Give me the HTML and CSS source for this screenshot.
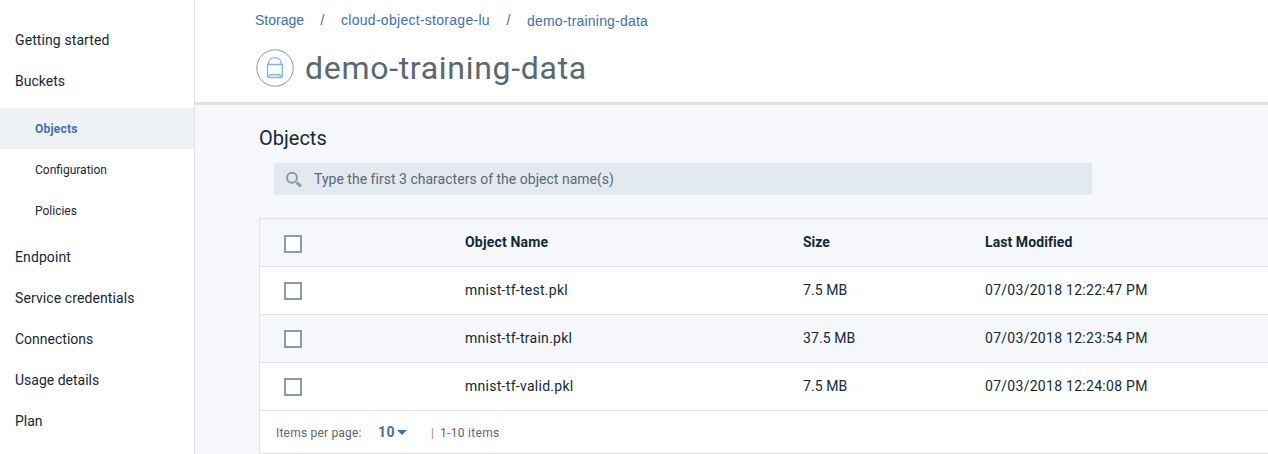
FILE: index.html
```html
<!DOCTYPE html>
<html lang="en">
<head>
<meta charset="utf-8">
<title>demo-training-data</title>
<link rel="stylesheet" href="styles.css">
</head>
<body>
<div class="app">
  <nav class="sidebar">
    <a class="nav-item t-getting">Getting started</a>
    <a class="nav-item t-buckets">Buckets</a>
    <div class="subnav">
      <a class="sub-item active">Objects</a>
      <a class="sub-item t-config">Configuration</a>
      <a class="sub-item t-policies">Policies</a>
    </div>
    <a class="nav-item t-endpoint">Endpoint</a>
    <a class="nav-item t-service">Service credentials</a>
    <a class="nav-item t-conn">Connections</a>
    <a class="nav-item t-usage">Usage details</a>
    <a class="nav-item t-plan">Plan</a>
  </nav>
  <main class="main">
    <header class="header">
      <div class="crumbs">
        <a>Storage</a><span class="slash">/</span><a class="crumb-mid">cloud-object-storage-lu</a><span class="slash">/</span><a class="crumb-last">demo-training-data</a>
      </div>
      <div class="title-row">
        <svg class="bucket" width="38" height="38" viewBox="0 0 38 38" fill="none">
          <circle cx="19" cy="19" r="18.2" stroke="#8897a2"/>
          <g stroke="#7cb5fa" stroke-width="1.3">
            <path d="M12.500 15.500V14.500C12.500 10.800 15.200 8.600 18.800 8.600S25.200 10.800 25.200 14.500V15.500"/>
            <path d="M11.500 15.500H26.300V26.800Q26.300 28.500 24.300 28.500H13.500Q11.500 28.500 11.500 26.800Z"/>
            <path d="M12 27.300Q13.500 25.500 18.900 25.500T25.800 27.300"/>
          </g>
        </svg>
        <h1 class="title">demo-training-data</h1>
      </div>
    </header>
    <section class="content">
      <h2 class="heading">Objects</h2>
      <div class="search">
        <svg class="search-icon" width="17" height="17" viewBox="0 0 17 17" fill="none" stroke="#8c9ba5">
          <circle cx="7" cy="6.700" r="5" stroke-width="2"/>
          <path d="M11.600 11.400L15.900 15.400" stroke-width="3"/>
        </svg>
        <span class="placeholder">Type the first 3 characters of the object name(s)</span>
      </div>
      <div class="table">
        <div class="row head"><span class="box"></span><span class="t-name">Object Name</span><span class="t-size">Size</span><span class="t-mod">Last Modified</span></div>
        <div class="row"><span class="box"></span><span class="name">mnist-tf-test.pkl</span><span class="size">7.5 MB</span><span class="date">07/03/2018 12:22:47 PM</span></div>
        <div class="row alt"><span class="box"></span><span class="name">mnist-tf-train.pkl</span><span class="size">37.5 MB</span><span class="date">07/03/2018 12:23:54 PM</span></div>
        <div class="row"><span class="box"></span><span class="name">mnist-tf-valid.pkl</span><span class="size">7.5 MB</span><span class="date">07/03/2018 12:24:08 PM</span></div>
        <div class="pager">
          <span class="per-page">Items per page:</span>
          <span class="count">10</span>
          <svg class="caret" width="10" height="5" viewBox="0 0 10 5"><path d="M0 0H10L5 5Z" fill="#4071b8"/></svg>
          <span class="bar">|</span>
          <span class="range">1-10 items</span>
        </div>
      </div>
    </section>
  </main>
</div>
</body>
</html>
```
FILE: styles.css
```css
* { box-sizing: border-box; }
body {
  margin: 0;
  overflow: hidden;
  background: #f5f7fb;
  color: #152935;
  font: 14px/20px Roboto, "Liberation Sans", sans-serif;
  white-space: nowrap;
}
.app { display: flex; height: 454px; }
.sidebar {
  flex: 0 0 195px;
  padding-top: 19px;
  background: #fff;
  border-right: 1px solid #dfe3e6;
}
.nav-item { display: flex; align-items: center; height: 41px; padding-left: 15px; letter-spacing: .1px; }
.t-buckets { letter-spacing: .02px; }
.t-conn { letter-spacing: 0; }
.t-usage { letter-spacing: 0; }
.t-plan { letter-spacing: 0; }
.subnav { padding: 7px 0 5px; }
.sub-item { display: flex; align-items: center; height: 41px; padding-left: 35px; font-size: 12px; letter-spacing: 0; }
.active { background: #eef2f5; color: #4071b8; font-weight: 700; letter-spacing: .2px; }
.main { flex: 1; min-width: 0; }
.header { height: 105px; padding: 10px 0 0 60px; background: #fff; border-bottom: 3px solid #dfe3e6; }
.crumbs {
  display: flex;
  height: 20px;
  color: #4071b8;
  font-family: "Liberation Sans", sans-serif;
}
.slash { width: 37px; text-align: center; color: #5a6872; }
.crumb-mid { letter-spacing: .28px; }
.crumb-last { padding-top: 1px; letter-spacing: .2px; }
.title-row { display: flex; align-items: flex-start; gap: 11px; padding: 19px 0 0 1px; }
.title { margin: 0; color: #5a6872; font-size: 32px; line-height: 38px; font-weight: 400; letter-spacing: .7px; }
.bucket { flex: none; }
.content { padding: 20px 0 0 64px; }
.heading { margin: 0; font-size: 20px; line-height: 26px; font-weight: 400; }
.search {
  display: flex;
  align-items: center;
  width: 818px;
  height: 32px;
  margin: 12px 0 23px 15px;
  padding-left: 11px;
  gap: 12px;
  background: #e3e9f1;
  color: #5a6872;
}
.placeholder { letter-spacing: .02px; }
.table { height: 236px; border: solid #dfe3e6; border-width: 1px 0 1px 1px; background: #fff; }
.row {
  display: grid;
  grid-template-columns: 205px 338px 182px 1fr;
  align-items: center;
  height: 48px;
  padding-bottom: 2px;
  border-bottom: 1px solid #dfe3e6;
}
.head { background: #f5f7fb; font-weight: 700; }
.head .box { margin-top: 4px; }
.alt { background: #f5f7fb; }
.box { width: 18px; height: 18px; margin: 2px 0 0 24px; border: 2px solid #8c9ba5; background: #fff; }
.t-name { letter-spacing: .18px; }
.t-mod { letter-spacing: .08px; }
.name { letter-spacing: .28px; }
.size { letter-spacing: .08px; }
.date { letter-spacing: .28px; }
.pager { display: flex; align-items: center; height: 44px; padding-left: 16px; color: #5a6872; font-size: 12px; }
.per-page { width: 102px; letter-spacing: .2px; }
.count { width: 19px; margin-bottom: 2px; color: #4071b8; font-size: 14px; font-weight: 700; letter-spacing: .4px; }
.caret { margin-bottom: 1px; }
.bar { margin-left: 24px; width: 9px; color: #b9816c; }
.range { letter-spacing: .3px; }
```
